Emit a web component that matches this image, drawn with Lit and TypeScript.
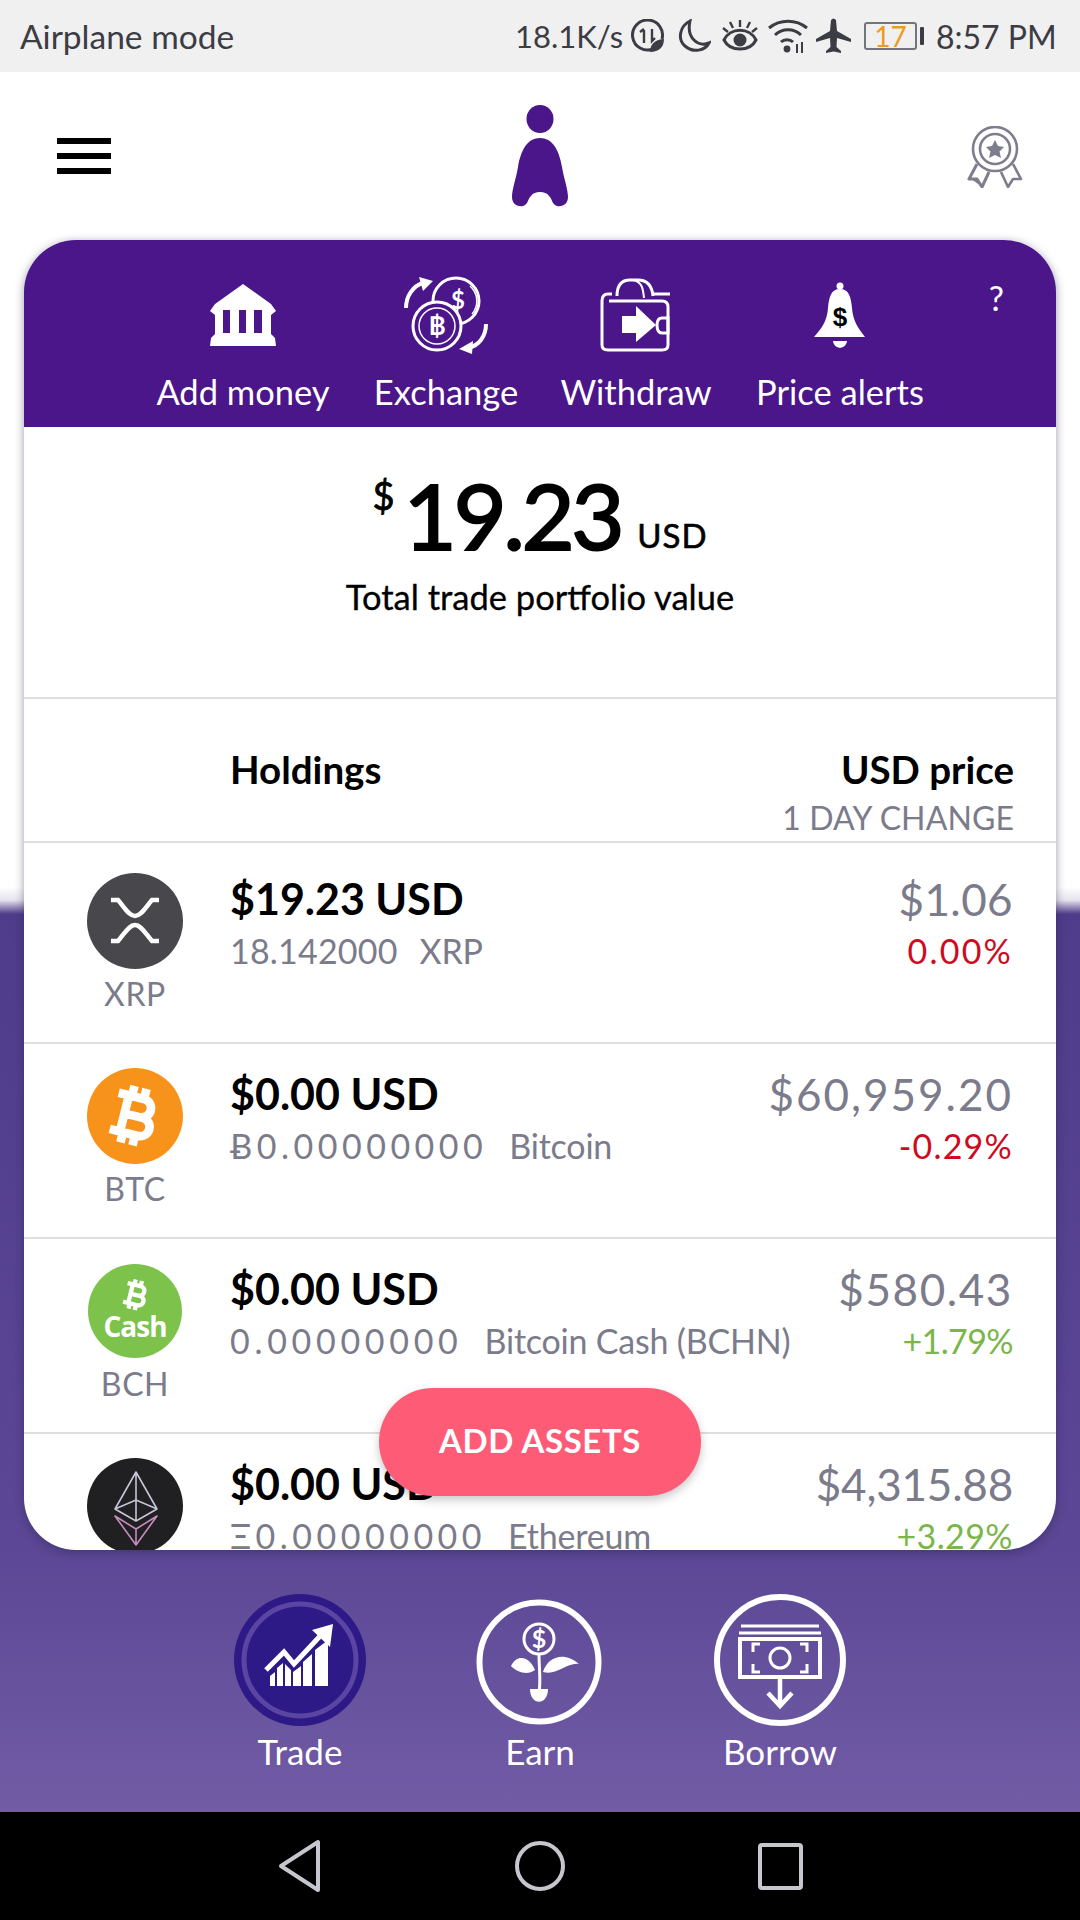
import { LitElement, html, css, svg } from "lit";
import { customElement } from "lit/decorators.js";

const BTC_PATH = "M17.06 11.57c.59-.69.94-1.59.94-2.57 0-1.86-1.27-3.43-3-3.87V3h-2v2h-2V3H9v2H6v2h2v10H6v2h3v2h2v-2h2v2h2v-2c2.21 0 4-1.79 4-4 0-1.45-.78-2.73-1.94-3.43zM10 7h4c1.1 0 2 .9 2 2s-.9 2-2 2h-4V7zm5 10h-5v-4h5c1.1 0 2 .9 2 2s-.9 2-2 2z";

const coinIcons: Record<string, unknown> = {
  XRP: svg`<circle cx="48" cy="48" r="48" fill="#47474c"/>
    <path d="M24 27 H31 C38 35 42 43 48 43 C54 43 58 35 65 27 H72 M24 68 H31 C38 60 42 52 48 52 C54 52 58 60 65 68 H72" fill="none" stroke="#fff" stroke-width="4.500"/>`,
  BTC: svg`<circle cx="48" cy="48" r="48" fill="#f7931a"/>
    <g transform="translate(48 48) rotate(14) scale(3.1) translate(-12.5 -12)"><path d="${BTC_PATH}" fill="#fff" stroke="#fff" stroke-width=".8"/></g>`,
  BCH: svg`<circle cx="48" cy="48" r="47" fill="#7dc24b"/>
    <g transform="translate(49 32) rotate(14) scale(1.6) translate(-12.5 -12)"><path d="${BTC_PATH}" fill="#fff" stroke="#fff" stroke-width=".7"/></g>
    <text x="48" y="74" text-anchor="middle" font-family="'Open Sans',sans-serif" font-weight="700" font-size="28" letter-spacing="-1" fill="#fff">Cash</text>`,
  ETH: svg`<circle cx="48" cy="48" r="48" fill="#202023"/>
    <g fill="none" stroke-width="1.6" stroke-linejoin="round">
      <path d="M49 14 L28 51 L49 63 L70 51 Z M49 14 V63 M28 51 L49 42 L70 51 M49 42V63" stroke="#c9c3d6"/>
      <path d="M28 58 L49 71 L70 58 L49 87 Z M49 71 V87" stroke="#c78bbd"/>
    </g>`,
};

const rows = [
  { sym: "XRP", value: "$19.23 USD", amount: "18.142000", amountLs: 0.2, name: "XRP", price: "$1.06", priceLs: 0.4, change: "0.00%", changeLs: 2.2, tone: "down", first: true },
  { sym: "BTC", value: "$0.00 USD", amount: "Ƀ0.00000000", amountLs: 4.5, name: "Bitcoin", price: "$60,959.20", priceLs: 2, change: "-0.29%", changeLs: 1.2, tone: "down" },
  { sym: "BCH", value: "$0.00 USD", amount: "0.00000000", amountLs: 4.7, name: "Bitcoin Cash (BCHN)", price: "$580.43", priceLs: 1.6, change: "+1.79%", changeLs: -0.6, tone: "up" },
  { sym: "ETH", value: "$0.00 USD", amount: "Ξ0.00000000", amountLs: 4.5, name: "Ethereum", price: "$4,315.88", priceLs: -0.2, change: "+3.29%", changeLs: 0.4, tone: "up" },
];

@customElement("app-root")
export class AppRoot extends LitElement {
  static styles = css`
    :host { display: block; width: 1080px; height: 1920px; overflow: hidden; font-family: "Lato", "Open Sans", sans-serif; color: #000; }
    * { box-sizing: border-box; }
    svg { display: block; }
    .page { height: 1920px; display: flex; flex-direction: column; }

    .status { height: 72px; background: #f0f0f0; color: #3c3c44; display: flex; align-items: center; padding: 0 25px 0 20px; font-size: 33.5px; }
    .status-left { flex: 1; }
    .status-right { display: flex; align-items: center; font-size: 31px; }
    .speed { width: 116px; }
    .clock { width: 119px; text-align: right; white-space: nowrap; font-size: 32px; }
    .batt { width: 53px; height: 28px; border: 2px solid #74747f; border-radius: 3px; color: #ee9a20; font-size: 28px; line-height: 24px; text-align: center; }
    .nub { width: 4px; height: 18px; background: #3c3c44; margin-left: 3px; border-radius: 1px; }

    .main { flex: 1; display: flex; flex-direction: column; background: linear-gradient(180deg, #fff 0, #fff 815px, #e6e3ee 828px, #4f3c8a 842px, #5b4795 1478px, #725ca6 100%); }
    .top { height: 168px; display: flex; align-items: flex-start; justify-content: space-between; padding: 33px 57px 0; position: relative; }
    .burger { width: 54px; height: 36px; margin-top: 33px; display: flex; flex-direction: column; justify-content: space-between; }
    .burger i { display: block; height: 6px; background: #000; }
    .logo { position: absolute; left: 511px; top: 33px; }
    .medal { margin-top: 21px; }

    .card { margin: 0 24px; height: 1310px; border-radius: 52px; background: #fff; overflow: hidden; position: relative; box-shadow: 0 2px 10px rgba(40,30,70,.45); display: flex; flex-direction: column; flex: none; }
    .actions { height: 187px; flex: none; background: #4a1689; color: #fff; padding: 31px 0 0 116px; position: relative; }
    .actions-row { display: flex; }
    .action { display: flex; flex-direction: column; align-items: center; height: 153px; }
    .action .ic { height: 88px; display: flex; align-items: center; justify-content: center; }
    .action span { font-size: 34.5px; line-height: 44px; margin-top: 11px; white-space: nowrap; }
    .a1 { width: 206px; } .a2 { width: 200px; } .a3 { width: 180px; } .a4 { width: 228px; }
    .help { position: absolute; top: 38px; right: 52px; font-size: 34px; line-height: 40px; }

    .hero { height: 272px; flex: none; border-bottom: 2px solid #dedede; display: flex; flex-direction: column; align-items: center; padding-top: 36px; }
    .total { display: flex; align-items: flex-start; height: 104px; }
    .total .cur { font-size: 38px; line-height: 36px; margin-top: 14px; margin-right: 9px; -webkit-text-stroke: .8px #000; }
    .total .num { font-size: 92px; line-height: 104px; letter-spacing: -3.5px; -webkit-text-stroke: 2px #000; }
    .total .usd { font-size: 33px; line-height: 36px; margin-left: 16px; margin-top: 54px; letter-spacing: 1px; -webkit-text-stroke: .6px #000; }
    .hero p { margin: 8px 0 0; font-size: 34.500px; line-height: 44px; -webkit-text-stroke: .3px #000; }

    .head { height: 144px; flex: none; border-bottom: 2px solid #dedede; display: flex; justify-content: space-between; padding: 46px 42px 0 206px; }
    .head b { font-size: 38.5px; line-height: 48px; font-weight: 700; display: block; }
    .head .r { text-align: right; }
    .head small { font-size: 32px; line-height: 40px; color: #7b7b8b; display: block; letter-spacing: .1px; margin-top: 5px; }

    .row { height: 195px; flex: none; border-bottom: 2px solid #dedede; display: flex; padding: 24px 43px 0 0; }
    .row.first { height: 201px; padding-top: 30px; }
    .coin { width: 206px; padding-left: 63px; flex: none; }
    .coin svg { width: 96px; height: 96px; }
    .coin span { display: block; width: 96px; text-align: center; font-size: 32px; line-height: 40px; color: #7b7b8b; margin-top: 5px; letter-spacing: .6px; }
    .mid { flex: 1; min-width: 0; }
    .val { font-size: 43px; line-height: 52px; font-weight: 700; white-space: nowrap; }
    .sub { font-size: 34px; line-height: 44px; color: #7b7b8b; margin-top: 4px; white-space: nowrap; display: flex; gap: 22px; }
    .sub .nm { letter-spacing: -.2px; }
    .right { text-align: right; flex: none; }
    .price { font-size: 44px; line-height: 52px; color: #7b7b8b; white-space: nowrap; }
    .chg { font-size: 34px; line-height: 44px; margin-top: 4px; }
    .chg.down { color: #cf0a1e; }
    .chg.up { color: #7ab648; }

    .fab { position: absolute; left: 355px; top: 1148px; width: 322px; height: 108px; border-radius: 54px; background: #fe5b77; color: #fff; font-size: 33px; font-weight: 700; display: flex; align-items: center; justify-content: center; padding-bottom: 6px; box-shadow: 0 4px 10px rgba(0,0,0,.22); letter-spacing: .6px; border: none; font-family: inherit; }

    .tabs { flex: 1; display: flex; justify-content: center; gap: 108px; padding: 42px 0 0 0; color: #fff; }
    .tab { display: flex; flex-direction: column; align-items: center; width: 132px; }
    .tab span { font-size: 35px; line-height: 44px; margin-top: 1px; }
    .tab svg { width: 136px; height: 136px; flex: none; }

    .nav { height: 108px; flex: none; background: #000; display: flex; align-items: center; }
    .nav svg { width: 1080px; height: 108px; }
  `;

  private bank() {
    return html`<svg width="68" height="62" viewBox="0 0 68 62">
      <path fill="#fff" d="M34 0 L62 20 L67 27 L62 31 V50 L66 54 L67 62 H1 L2 54 L6 50 V31 L1 27 L6 20 Z"/>
      <path fill="#4a1689" d="M14 26h7v23h-7zM30 26h7v23h-7zM45 26h8v23h-8z"/>
    </svg>`;
  }
  private exchange() {
    return html`<svg width="84" height="78" viewBox="0 0 84 78" fill="none" stroke="#fff" stroke-width="3">
      <circle cx="52" cy="25" r="23"/><path d="M66 10a20 20 0 0 1 2 28" stroke-width="1.5"/>
      <circle cx="33" cy="50" r="24" fill="#4a1689"/><circle cx="33" cy="50" r="18" stroke-width="1.5"/>
      <text x="33" y="59" text-anchor="middle" font-size="26" font-weight="700" fill="#fff" stroke="none" font-family="Lato,sans-serif">฿</text>
      <text x="54" y="33" text-anchor="middle" font-size="24" font-weight="700" fill="#fff" stroke="none" font-family="Lato,sans-serif">$</text>
      <path d="M2 32 C2 20 9 10 19 7" stroke-width="4"/><path d="M15 1 L29 5 L19 15 Z" fill="#fff" stroke="none"/>
      <path d="M82 48 C82 60 75 70 64 72" stroke-width="4"/><path d="M69 65 L55 73 L68 78 Z" fill="#fff" stroke="none"/>
    </svg>`;
  }
  private wallet() {
    return html`<svg width="72" height="74" viewBox="0 0 72 74" fill="none" stroke="#fff" stroke-width="3">
      <path d="M17 18 C17 7 22 2 30 2 H38 C47 2 52 8 53 18"/><path d="M33 2 C42 4 43 10 44 20" stroke-width="2"/><path d="M52 16 H70" />
      <path d="M12 16 H8 Q2 16 2 23 V67 Q2 72 8 72 H62 Q68 72 68 67 V29 Q68 23 62 23 H9"/>
      <path d="M68 40 H62 Q57 40 57 47 Q57 55 62 55 H68 Z" stroke-width="3"/>
      <path d="M22 38 H36 V28 L56 47 L36 64 V55 H22 Z" fill="#fff" stroke="none"/>
    </svg>`;
  }
  private bell() {
    return html`<svg width="54" height="66" viewBox="0 0 54 66">
      <circle cx="27" cy="4" r="3.5" fill="#fff"/>
      <path d="M27 7 C36 7 38 15 39 26 C40 40 46 47 52 55 H1 C8 47 14 40 15 26 C16 15 18 7 27 7 Z" fill="#fff"/>
      <path d="M20 59 H34 C33 68 21 68 20 59 Z" fill="#fff"/>
      <text x="27" y="44" text-anchor="middle" font-size="26" font-weight="700" font-family="'Liberation Sans',sans-serif" fill="#000">$</text>
    </svg>`;
  }

  render() {
    return html`<div class="page">
      <div class="status">
        <div class="status-left">Airplane mode</div>
        <div class="status-right">
          <span class="speed">18.1K/s</span>
          <svg width="34" height="34" viewBox="0 0 34 34" fill="none" stroke="#3c3c44" stroke-width="3">
            <path d="M22 30 A15 15 0 1 1 31 20"/><path d="M13 11v13M9 13l4-3M21 10v12l3-3" stroke-width="2.4"/>
            <path d="M19 33 C19 25 25 20 33 20 C33 28 28 33 19 33Z" fill="#3c3c44" stroke="none"/></svg>
          <svg style="margin-left:12px" width="34" height="34" viewBox="0 0 34 34" fill="none" stroke="#3c3c44" stroke-width="3">
            <path d="M13 2 C3 7 0 20 8 27 C16 34 28 32 32 24 C22 28 9 20 13 2Z"/></svg>
          <svg style="margin-left:11px" width="36" height="34" viewBox="0 0 36 34" fill="none" stroke="#3c3c44" stroke-width="3">
            <path d="M2 21 C8 8 28 8 34 21 C28 33 8 33 2 21Z"/><circle cx="18" cy="21" r="6.5" fill="#3c3c44" stroke="none"/>
            <path d="M18 1v7M8 3l3 6M28 3l-3 6M1 9l5 4M35 9l-5 4" stroke-width="2.4"/></svg>
          <svg style="margin-left:10px" width="40" height="36" viewBox="0 0 40 36" fill="none" stroke="#3c3c44" stroke-width="3">
            <path d="M1 10 C12 1 28 1 39 10M7 17 C14 10 26 10 33 17M13 24 C16 21 22 21 25 24"/>
            <circle cx="19" cy="31" r="3.4" fill="#3c3c44" stroke="none"/>
            <path d="M29 26v9M34 24v11" stroke-width="2"/></svg>
          <svg style="margin-left:8px" width="35" height="36" viewBox="0 0 35 36" fill="#3c3c44">
            <path d="M15 2 Q17.500 -1 20 2 L21 13 L35 21 V24 L21 20 L20.500 29 L25 33 V35 L17.500 33.500 L10 35 V33 L14.500 29 L14 20 L0 24 V21 L14 13 Z"/></svg>
          <div class="batt" style="margin-left:13px">17</div>
          <div class="nub"></div>
          <span class="clock" style="margin-left:12px">8:57 PM</span>
        </div>
      </div>

      <div class="main">
        <div class="top">
          <div class="burger"><i></i><i></i><i></i></div>
          <svg class="logo" width="58" height="102" viewBox="0 0 58 102" fill="#4a1689">
            <ellipse cx="29" cy="14" rx="13.500" ry="14"/>
            <path d="M29 33 C41 33 48 44 51 62 C53 74 57 84 57 92 C57 100 50 102 46 101 C41 100 41 93 38 91 C36 88 33 87 29 87 C25 87 22 88 20 91 C17 93 17 100 12 101 C8 102 1 100 1 92 C1 84 5 74 7 62 C10 44 17 33 29 33 Z"/>
          </svg>
          <svg class="medal" width="56" height="62" viewBox="0 0 56 62" fill="none" stroke="#7d7d8d" stroke-width="2.6">
            <circle cx="28" cy="23" r="22"/><circle cx="28" cy="23" r="15"/>
            <path d="M28 14 L31 20 L37 21 L32.500 25.500 L34 32 L28 29 L22 32 L23.500 25.500 L19 21 L25 20 Z" fill="#7d7d8d" stroke="none"/>
            <path d="M10 38 L2 53 L10 53 L15 61 L22 46" stroke-linejoin="round" stroke-width="3"/>
            <path d="M46 38 L54 53 L46 53 L41 61 L34 46" stroke-linejoin="round"/>
            <path d="M4 53 L10 52 L14 60 Z" fill="#7d7d8d" stroke="none"/>
          </svg>
        </div>

        <div class="card">
          <div class="actions">
            <div class="actions-row">
              <div class="action a1"><div class="ic">${this.bank()}</div><span>Add money</span></div>
              <div class="action a2"><div class="ic">${this.exchange()}</div><span>Exchange</span></div>
              <div class="action a3"><div class="ic">${this.wallet()}</div><span>Withdraw</span></div>
              <div class="action a4"><div class="ic">${this.bell()}</div><span>Price alerts</span></div>
            </div>
            <div class="help">?</div>
          </div>

          <div class="hero">
            <div class="total"><span class="cur">$</span><span class="num">19.23</span><span class="usd">USD</span></div>
            <p>Total trade portfolio value</p>
          </div>

          <div class="head">
            <div><b>Holdings</b></div>
            <div class="r"><b>USD price</b><small>1 DAY CHANGE</small></div>
          </div>

          ${rows.map(r => html`<div class="row ${r.first ? "first" : ""}">
            <div class="coin"><svg viewBox="0 0 96 96">${coinIcons[r.sym]}</svg><span>${r.sym}</span></div>
            <div class="mid">
              <div class="val">${r.value}</div>
              <div class="sub"><span style="letter-spacing:${r.amountLs}px">${r.amount}</span><span class="nm">${r.name}</span></div>
            </div>
            <div class="right">
              <div class="price" style="letter-spacing:${r.priceLs}px">${r.price}</div>
              <div class="chg ${r.tone}" style="letter-spacing:${r.changeLs}px">${r.change}</div>
            </div>
          </div>`)}

          <button class="fab">ADD ASSETS</button>
        </div>

        <div class="tabs">
          <div class="tab">
            <svg viewBox="0 0 136 136">
              <circle cx="68" cy="68" r="66" fill="#2e1a87"/>
              <circle cx="68" cy="68" r="56" fill="#2e1a87" stroke="#5b45a3" stroke-width="5"/>
              <path d="M34 78 L52 60 L62 72 L90 42" fill="none" stroke="#fff" stroke-width="5"/>
              <path d="M80 38 L101 32 L98 55 Z" fill="#fff"/>
              <path d="M38 84 L43 80 V94 H38 Z M45 76 L51 71 V94 H45 Z M53 72 L59 78 V94 H53 Z M61 80 L69 74 V94 H61 Z M71 70 L80 62 V94 H71 Z M83 58 L96 48 V94 H83 Z" fill="#fff" transform="translate(0 0)"/>
            </svg>
            <span>Trade</span>
          </div>
          <div class="tab">
            <svg viewBox="0 0 136 136">
              <circle cx="67" cy="70" r="59.500" fill="none" stroke="#fff" stroke-width="6"/>
              <circle cx="67" cy="47" r="15" fill="none" stroke="#fff" stroke-width="3"/>
              <text x="67" y="56" text-anchor="middle" font-size="25" font-weight="700" fill="#fff" font-family="Lato,sans-serif">$</text>
              <path d="M67 62 C67 75 69 90 67 100" fill="none" stroke="#fff" stroke-width="3"/>
              <path d="M58 97 H76 C76 114 58 114 58 97 Z" fill="#fff"/>
              <path d="M39 74 C45 62 57 64 63 78 C55 84 45 80 39 74 Z" fill="#fff"/>
              <path d="M71 80 C75 66 91 58 107 72 C95 70 85 84 71 80 Z" fill="#fff"/>
            </svg>
            <span>Earn</span>
          </div>
          <div class="tab">
            <svg viewBox="0 0 136 136">
              <circle cx="68" cy="68" r="63" fill="none" stroke="#fff" stroke-width="6"/>
              <path d="M29 34 H107 M27 41 H109" stroke="#fff" stroke-width="3"/>
              <rect x="28" y="47" width="80" height="38" fill="none" stroke="#fff" stroke-width="4"/>
              <ellipse cx="68" cy="66" rx="10" ry="10" fill="none" stroke="#fff" stroke-width="3"/>
              <path d="M41 60 V52 H48 M95 60 V52 H88 M41 72 V80 H48 M95 72 V80 H88" fill="none" stroke="#fff" stroke-width="3"/>
              <path d="M68 86 V114 M56 101 L68 114 L80 101" fill="none" stroke="#fff" stroke-width="4.500"/>
            </svg>
            <span>Borrow</span>
          </div>
        </div>
      </div>

      <div class="nav">
        <svg viewBox="0 0 1080 108" fill="none" stroke="#c6c6cf" stroke-width="4" stroke-linejoin="round">
          <path d="M318 30 V78 L281 54 Z"/>
          <circle cx="540" cy="54" r="23"/>
          <rect x="760" y="33" width="41" height="43" rx="2"/>
        </svg>
      </div>
    </div>`;
  }
}
